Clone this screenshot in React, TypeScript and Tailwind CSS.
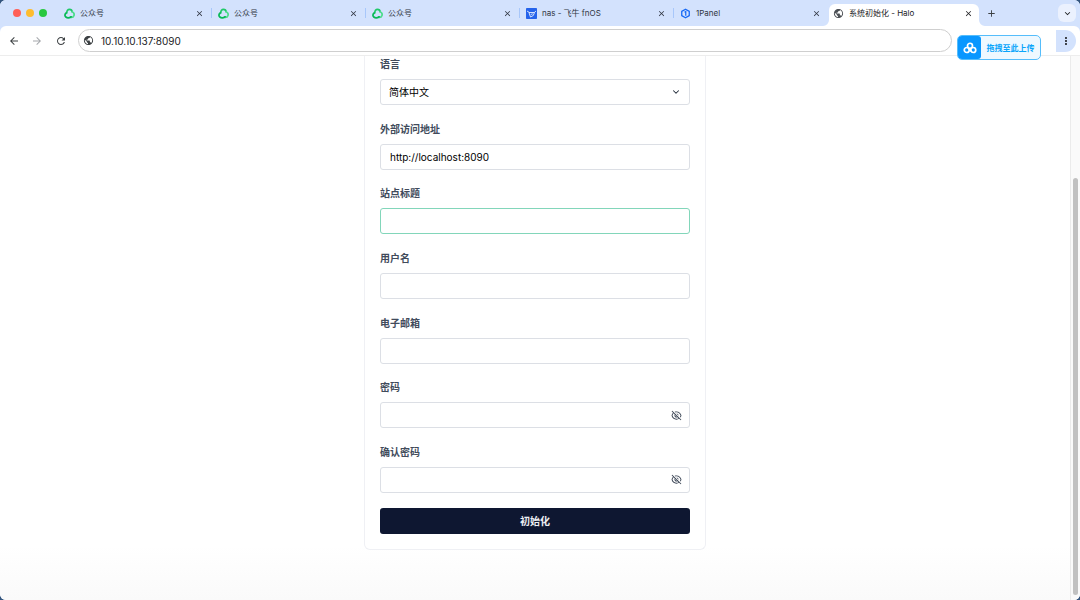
import { useState, type ReactNode } from "react";
import {
  MdAdd,
  MdArrowBack,
  MdArrowForward,
  MdClose,
  MdKeyboardArrowDown,
  MdMoreVert,
  MdPublic,
  MdRefresh,
} from "react-icons/md";
import { RiEyeLine, RiEyeOffLine } from "react-icons/ri";
import { ChevronDown } from "lucide-react";

function OfficialAccountIcon() {
  return (
    <svg viewBox="0 0 24 24" className="size-[11px]" fill="none" strokeLinecap="round" strokeWidth="3.8">
      <path d="M6.2 10.500C5.800 5.800 8.500 2.800 12 2.800c3.200 0 5.400 2.200 5.600 5.200" stroke="#1fc968" />
      <path d="M17.600 8.200c3.600 1.600 5.200 5 4.200 8.200-1 3-4 4.600-7.300 4" stroke="#4fdc8d" />
      <path d="M15.500 19.200c-3.500 2.300-8.700 2.600-11.500.4-2.800-2.300-2.500-6.200.6-8.600" stroke="#07b956" />
    </svg>
  );
}

function FnosIcon() {
  return (
    <svg viewBox="0 0 22 22" className="size-[11px]">
      <rect width="22" height="22" rx="1.500" fill="#2563eb" />
      <path d="M2 6l4 2.500M20 6l-3 2.500M6 9h11l-2.500 6-5.500 3L7.500 14 6 9zM9.500 13l4-1.500" fill="none" stroke="#fff" strokeWidth="1.600" />
    </svg>
  );
}

function PanelIcon() {
  return (
    <svg viewBox="0 0 22 22" className="size-[11px]" fill="none" stroke="#1769f5">
      <path d="M11 2.500l7.500 4.200v8.600L11 19.500l-7.500-4.200V6.700z" strokeWidth="2.600" strokeLinejoin="round" />
      <path d="M9 8.500L11.500 7v8.500" strokeWidth="2.500" />
    </svg>
  );
}

function CloudIcon() {
  return (
    <svg viewBox="0 0 28 24" className="h-[12px] w-[14px]" fill="none" stroke="#fff" strokeWidth="3.400">
      <circle cx="14" cy="7.500" r="5" />
      <circle cx="7.500" cy="16" r="5" />
      <circle cx="20.500" cy="16" r="5" />
      <path d="M11 13l6 6" strokeLinecap="round" />
    </svg>
  );
}

function TabFoot({ side }: { side: "left" | "right" }) {
  return (
    <svg
      viewBox="0 0 6 6"
      className={side === "left" ? "absolute bottom-0 -left-1.5 size-1.5" : "absolute bottom-0 -right-1.5 size-1.5"}
    >
      <path d={side === "left" ? "M6 0v6H0a6 6 0 0 0 6-6z" : "M0 0v6h6a6 6 0 0 1-6-6z"} fill="#fff" />
    </svg>
  );
}

type TabProps = { title: string; icon: ReactNode; active?: boolean; divider?: boolean };

function BrowserTab({ title, icon, active, divider }: TabProps) {
  return (
    <div
      className={
        active
          ? "relative mt-1 ml-px flex w-[150px] items-center rounded-t-md bg-white pb-1 pl-1 text-[#202124]"
          : "relative flex w-[154px] min-w-0 items-center pl-1.5 text-[#303642]"
      }
    >
      {active && <TabFoot side="left" />}
      <button type="button" className="flex min-w-0 flex-1 items-center gap-[5px] text-left whitespace-nowrap">
        {icon}
        <span>{title}</span>
      </button>
      <button
        type="button"
        aria-label={`关闭 ${title}`}
        className={active ? "mr-1.5 flex size-2.5 items-center justify-center" : "mr-[7px] flex size-2.5 items-center justify-center"}
      >
        <MdClose className="size-[9px]" />
      </button>
      {divider && <span className="h-2.5 w-px bg-[#a8c7fa]" />}
      {active && <TabFoot side="right" />}
    </div>
  );
}

const fieldBox =
  "h-[26px] w-full rounded-[3px] border bg-white text-[10px] text-black outline-none";

function Field({ id, label, children }: { id: string; label: string; children: ReactNode }) {
  return (
    <div className="flex flex-col gap-[7px]">
      <label htmlFor={id} className="text-[10px] leading-[15px] font-semibold text-[#414b5b]">
        {label}
      </label>
      <div className="relative flex">{children}</div>
    </div>
  );
}

function PasswordField({ id, label }: { id: string; label: string }) {
  const [visible, setVisible] = useState(false);
  return (
    <Field id={id} label={label}>
      <input id={id} type={visible ? "text" : "password"} className={`${fieldBox} border-[#dcdfe5] pr-7 pl-[9px]`} />
      <button
        type="button"
        aria-label="切换密码可见性"
        onClick={() => setVisible(!visible)}
        className="absolute inset-y-0 right-2 flex items-center text-[#374151]"
      >
        {visible ? <RiEyeLine className="size-[11px]" /> : <RiEyeOffLine className="size-[11px]" />}
      </button>
    </Field>
  );
}

export default function App() {
  return (
    <div className="min-h-screen bg-[#33557f] font-['Inter','Noto_Sans_CJK_SC',sans-serif]">
      <div className="flex min-h-screen flex-col overflow-hidden rounded-md bg-white">
        <header className="relative bg-[#d3e2fd]">
          <div className="flex h-[26px] pl-[13px] text-[8px] leading-3">
            <div className="mr-[11px] flex items-center gap-[5px]">
              <span className="size-2 rounded-full bg-[#ff5f57]" />
              <span className="size-2 rounded-full bg-[#febc2e]" />
              <span className="size-2 rounded-full bg-[#28c840]" />
            </div>
            <BrowserTab title="公众号" icon={<OfficialAccountIcon />} divider />
            <BrowserTab title="公众号" icon={<OfficialAccountIcon />} divider />
            <BrowserTab title="公众号" icon={<OfficialAccountIcon />} divider />
            <BrowserTab title="nas - 飞牛 fnOS" icon={<FnosIcon />} divider />
            <BrowserTab title="1Panel" icon={<PanelIcon />} />
            <BrowserTab title="系统初始化 - Halo" icon={<MdPublic className="size-[11px] text-[#4b4f54]" />} active />
            <button type="button" aria-label="新建标签页" className="ml-[7px] flex items-center text-[#3c4043]">
              <MdAdd className="size-[11px]" />
            </button>
            <button
              type="button"
              aria-label="搜索标签页"
              className="mt-1 mr-1 ml-auto flex size-[18px] items-center justify-center rounded-md bg-[#ebf1fe] text-[#202124]"
            >
              <MdKeyboardArrowDown className="size-[11px]" />
            </button>
          </div>
          <div className="flex h-[30px] items-center rounded-t-md border-b border-[#ededed] bg-white pr-1 pl-2 text-[#3c4043]">
            <button type="button" aria-label="后退" className="mr-[11px]">
              <MdArrowBack className="size-3" />
            </button>
            <button type="button" aria-label="前进" className="mr-3 text-[#a5a8ac]">
              <MdArrowForward className="size-3" />
            </button>
            <button type="button" aria-label="刷新" className="mr-[11px]">
              <MdRefresh className="size-3" />
            </button>
            <div className="flex h-[23px] flex-1 items-center gap-[7px] rounded-full border border-[#cfcfcf] pl-[4px]">
              <MdPublic className="size-[11px]" />
              <input
                aria-label="地址栏"
                defaultValue="10.10.10.137:8090"
                className="min-w-0 flex-1 bg-transparent text-[10px] leading-3 text-[#202124] outline-none"
              />
            </div>
            <button
              type="button"
              aria-label="菜单"
              className="ml-[104px] flex h-[22px] w-5 items-center justify-center rounded-r-full bg-[#d3e2fd] text-[#202124]"
            >
              <MdMoreVert className="size-3" />
            </button>
          </div>
          <button
            type="button"
            className="absolute top-[35px] right-[39px] flex h-[25px] w-[84px] items-center overflow-hidden rounded-[5px] border border-[#55bdfb] bg-[#eef8ff] text-[8px] font-bold whitespace-nowrap text-[#0aa5fb]"
          >
            <span className="flex h-full w-[23px] shrink-0 items-center justify-center rounded-r-[3px] bg-[#0997ff]">
              <CloudIcon />
            </span>
            <span className="flex-1 text-center">拖拽至此上传</span>
          </button>
        </header>

        <div className="flex flex-1 bg-linear-to-b from-white from-90% to-[#fafafa]">
          <main className="flex flex-1 items-start justify-center pb-[50px]">
            <form
              onSubmit={(event) => event.preventDefault()}
              className="w-full max-w-[342px] rounded-b-md border border-t-0 border-[#eff0f4] bg-white px-[15px] pt-px pb-[15px]"
            >
              <div className="flex min-h-[436px] flex-col justify-between">
                <Field id="language" label="语言">
                  <select
                    id="language"
                    defaultValue="zh-CN"
                    className={`${fieldBox} appearance-none border-[#dcdfe5] pr-6 pl-2`}
                  >
                    <option value="zh-CN">简体中文</option>
                    <option value="en">English</option>
                  </select>
                  <ChevronDown
                    strokeWidth={2.5}
                    className="pointer-events-none absolute top-2 right-[9px] size-2.5 text-[#1f2937]"
                  />
                </Field>
                <Field id="external-url" label="外部访问地址">
                  <input
                    id="external-url"
                    type="url"
                    defaultValue="http://localhost:8090"
                    className={`${fieldBox} border-[#dcdfe5] px-[9px]`}
                  />
                </Field>
                <Field id="site-title" label="站点标题">
                  <input id="site-title" type="text" className={`${fieldBox} border-[#82d6ba] px-[9px]`} />
                </Field>
                <Field id="username" label="用户名">
                  <input id="username" type="text" className={`${fieldBox} border-[#dcdfe5] px-[9px]`} />
                </Field>
                <Field id="email" label="电子邮箱">
                  <input id="email" type="email" className={`${fieldBox} border-[#dcdfe5] px-[9px]`} />
                </Field>
                <PasswordField id="password" label="密码" />
                <PasswordField id="confirm-password" label="确认密码" />
              </div>
              <button
                type="submit"
                className="mt-[15px] h-[26px] w-full rounded-[3px] bg-[#0e1731] text-[10px] font-semibold text-[#eceef2]"
              >
                初始化
              </button>
            </form>
          </main>
          <div aria-hidden="true" className="flex w-2.5 justify-center border-l border-[#ebebeb] bg-[#fafafa]">
            <span className="mt-[122px] mb-[5px] w-[5px] rounded-full bg-[#c1c1c1]" />
          </div>
        </div>
      </div>
    </div>
  );
}
